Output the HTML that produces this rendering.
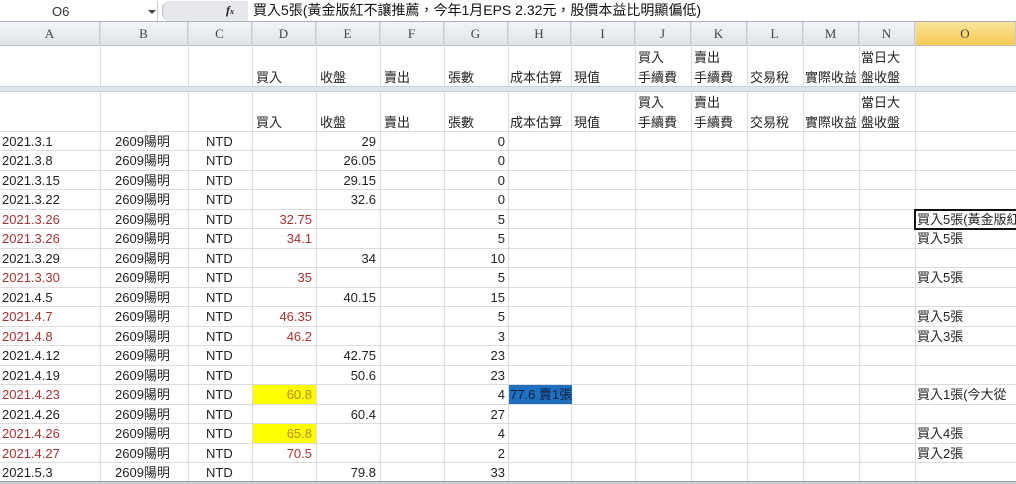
<!DOCTYPE html>
<html><head><meta charset="utf-8"><style>
*{margin:0;padding:0;box-sizing:border-box}
body{width:1016px;height:484px;overflow:hidden;background:#fff;position:relative;font-family:"Liberation Sans","Noto Sans CJK TC","WenQuanYi Zen Hei",sans-serif;font-size:13px;color:#222}
.a{position:absolute;white-space:nowrap;line-height:19px}
.v{position:absolute;top:22px;width:1px;height:460px;background:#dcdcdc}
.h{position:absolute;left:0;width:1016px;height:1px;background:#dcdcdc}
.r{color:#a83232}
.hd{position:absolute;top:22px;height:24px;line-height:24px;text-align:center;color:#444;font-family:"Liberation Serif",serif;font-size:13px;border-right:1px solid #c5cbd3;background:linear-gradient(#f2f4f7,#dfe4ea)}
</style></head><body>
<div style="position:absolute;left:0;top:0;width:1016px;height:22px;background:#fff;border-bottom:1px solid #a8b0bb"></div>
<div style="position:absolute;left:0;top:1px;width:158px;height:20px;border-right:1px solid #ccc"></div>
<div class="a" style="left:52px;top:2px;color:#333">O6</div>
<div style="position:absolute;left:148px;top:10px;border:4px solid transparent;border-top:4px solid #444;border-bottom:0"></div>
<div style="position:absolute;left:162px;top:1px;width:86px;height:20px;background:#e6e8eb;border-radius:8px 0 0 8px;border-left:1px solid #b8bec6"></div>
<div class="a" style="left:226px;top:1px;font-style:italic;font-family:'Liberation Serif',serif;font-weight:bold;font-size:12px">f<span style="font-size:8px">x</span></div>
<div class="a" style="left:253px;top:1px;font-size:14px;color:#111">買入5張(黃金版紅不讓推薦，今年1月EPS 2.32元，股價本益比明顯偏低)</div>
<div class="hd" style="left:0;width:100px">A</div>
<div class="hd" style="left:100px;width:88px">B</div>
<div class="hd" style="left:188px;width:64px">C</div>
<div class="hd" style="left:252px;width:64px">D</div>
<div class="hd" style="left:316px;width:64px">E</div>
<div class="hd" style="left:380px;width:64px">F</div>
<div class="hd" style="left:444px;width:64px">G</div>
<div class="hd" style="left:508px;width:63px">H</div>
<div class="hd" style="left:571px;width:64px">I</div>
<div class="hd" style="left:635px;width:56px">J</div>
<div class="hd" style="left:691px;width:56px">K</div>
<div class="hd" style="left:747px;width:56px">L</div>
<div class="hd" style="left:803px;width:56px">M</div>
<div class="hd" style="left:859px;width:56px">N</div>
<div class="hd" style="left:915px;width:101px;background:linear-gradient(#fbe49a,#f5c94e)">O</div>
<div class="h" style="top:45px;background:#b9c0c9"></div>
<div style="position:absolute;left:0;top:86px;width:1016px;height:6px;background:#dfe5ec;border-top:1px solid #c8d0d9;border-bottom:1px solid #c8d0d9;z-index:2"></div>
<div class="v" style="left:100px"></div><div class="v" style="left:188px"></div><div class="v" style="left:252px"></div><div class="v" style="left:316px"></div><div class="v" style="left:380px"></div><div class="v" style="left:444px"></div><div class="v" style="left:508px"></div><div class="v" style="left:571px"></div><div class="v" style="left:635px"></div><div class="v" style="left:691px"></div><div class="v" style="left:747px"></div><div class="v" style="left:803px"></div><div class="v" style="left:859px"></div><div class="v" style="left:915px"></div>
<div class="h" style="top:131px"></div><div class="h" style="top:150px"></div><div class="h" style="top:170px"></div><div class="h" style="top:189px"></div><div class="h" style="top:209px"></div><div class="h" style="top:228px"></div><div class="h" style="top:248px"></div><div class="h" style="top:267px"></div><div class="h" style="top:287px"></div><div class="h" style="top:306px"></div><div class="h" style="top:326px"></div><div class="h" style="top:345px"></div><div class="h" style="top:365px"></div><div class="h" style="top:384px"></div><div class="h" style="top:404px"></div><div class="h" style="top:423px"></div><div class="h" style="top:443px"></div><div class="h" style="top:462px"></div>
<div class="a" style="left:256px;top:68px">買入</div><div class="a" style="left:320px;top:68px">收盤</div><div class="a" style="left:384px;top:68px">賣出</div><div class="a" style="left:448px;top:68px">張數</div><div class="a" style="left:510px;top:68px">成本估算</div><div class="a" style="left:574px;top:68px">現值</div>
<div class="a" style="left:638px;top:48px">買入</div><div class="a" style="left:638px;top:68px">手續費</div><div class="a" style="left:694px;top:48px">賣出</div><div class="a" style="left:694px;top:68px">手續費</div><div class="a" style="left:750px;top:68px">交易稅</div><div class="a" style="left:805px;top:68px;width:54px;overflow:hidden">實際收益</div><div class="a" style="left:861px;top:48px">當日大</div><div class="a" style="left:861px;top:68px">盤收盤</div>
<div class="a" style="left:256px;top:113px">買入</div><div class="a" style="left:320px;top:113px">收盤</div><div class="a" style="left:384px;top:113px">賣出</div><div class="a" style="left:448px;top:113px">張數</div><div class="a" style="left:510px;top:113px">成本估算</div><div class="a" style="left:574px;top:113px">現值</div>
<div class="a" style="left:638px;top:93px">買入</div><div class="a" style="left:638px;top:113px">手續費</div><div class="a" style="left:694px;top:93px">賣出</div><div class="a" style="left:694px;top:113px">手續費</div><div class="a" style="left:750px;top:113px">交易稅</div><div class="a" style="left:805px;top:113px;width:54px;overflow:hidden">實際收益</div><div class="a" style="left:861px;top:93px">當日大</div><div class="a" style="left:861px;top:113px">盤收盤</div>
<div style="position:absolute;left:253px;top:385px;width:63px;height:19px;background:#ffff00"></div>
<div style="position:absolute;left:253px;top:424px;width:63px;height:19px;background:#ffff00"></div>
<div style="position:absolute;left:509px;top:385px;width:63px;height:19px;background:#1f6fbf"></div>
<div style="position:absolute;left:914px;top:209px;width:104px;height:21px;border:2px solid #111;z-index:3"></div>
<div class="a" style="left:2px;top:132px">2021.3.1</div><div class="a" style="left:115px;top:132px">2609陽明</div><div class="a" style="left:206px;top:132px">NTD</div><div class="a" style="right:640px;top:132px">29</div><div class="a" style="right:511px;top:132px">0</div>
<div class="a" style="left:2px;top:151px">2021.3.8</div><div class="a" style="left:115px;top:151px">2609陽明</div><div class="a" style="left:206px;top:151px">NTD</div><div class="a" style="right:640px;top:151px">26.05</div><div class="a" style="right:511px;top:151px">0</div>
<div class="a" style="left:2px;top:171px">2021.3.15</div><div class="a" style="left:115px;top:171px">2609陽明</div><div class="a" style="left:206px;top:171px">NTD</div><div class="a" style="right:640px;top:171px">29.15</div><div class="a" style="right:511px;top:171px">0</div>
<div class="a" style="left:2px;top:190px">2021.3.22</div><div class="a" style="left:115px;top:190px">2609陽明</div><div class="a" style="left:206px;top:190px">NTD</div><div class="a" style="right:640px;top:190px">32.6</div><div class="a" style="right:511px;top:190px">0</div>
<div class="a r" style="left:2px;top:210px">2021.3.26</div><div class="a" style="left:115px;top:210px">2609陽明</div><div class="a" style="left:206px;top:210px">NTD</div><div class="a r" style="right:704px;top:210px">32.75</div><div class="a" style="right:511px;top:210px">5</div><div class="a" style="left:917px;top:210px;width:99px;overflow:hidden;z-index:4">買入5張(黃金版紅不讓推薦</div>
<div class="a r" style="left:2px;top:229px">2021.3.26</div><div class="a" style="left:115px;top:229px">2609陽明</div><div class="a" style="left:206px;top:229px">NTD</div><div class="a r" style="right:704px;top:229px">34.1</div><div class="a" style="right:511px;top:229px">5</div><div class="a" style="left:917px;top:229px">買入5張</div>
<div class="a" style="left:2px;top:249px">2021.3.29</div><div class="a" style="left:115px;top:249px">2609陽明</div><div class="a" style="left:206px;top:249px">NTD</div><div class="a" style="right:640px;top:249px">34</div><div class="a" style="right:511px;top:249px">10</div>
<div class="a r" style="left:2px;top:268px">2021.3.30</div><div class="a" style="left:115px;top:268px">2609陽明</div><div class="a" style="left:206px;top:268px">NTD</div><div class="a r" style="right:704px;top:268px">35</div><div class="a" style="right:511px;top:268px">5</div><div class="a" style="left:917px;top:268px">買入5張</div>
<div class="a" style="left:2px;top:288px">2021.4.5</div><div class="a" style="left:115px;top:288px">2609陽明</div><div class="a" style="left:206px;top:288px">NTD</div><div class="a" style="right:640px;top:288px">40.15</div><div class="a" style="right:511px;top:288px">15</div>
<div class="a r" style="left:2px;top:307px">2021.4.7</div><div class="a" style="left:115px;top:307px">2609陽明</div><div class="a" style="left:206px;top:307px">NTD</div><div class="a r" style="right:704px;top:307px">46.35</div><div class="a" style="right:511px;top:307px">5</div><div class="a" style="left:917px;top:307px">買入5張</div>
<div class="a r" style="left:2px;top:327px">2021.4.8</div><div class="a" style="left:115px;top:327px">2609陽明</div><div class="a" style="left:206px;top:327px">NTD</div><div class="a r" style="right:704px;top:327px">46.2</div><div class="a" style="right:511px;top:327px">3</div><div class="a" style="left:917px;top:327px">買入3張</div>
<div class="a" style="left:2px;top:346px">2021.4.12</div><div class="a" style="left:115px;top:346px">2609陽明</div><div class="a" style="left:206px;top:346px">NTD</div><div class="a" style="right:640px;top:346px">42.75</div><div class="a" style="right:511px;top:346px">23</div>
<div class="a" style="left:2px;top:366px">2021.4.19</div><div class="a" style="left:115px;top:366px">2609陽明</div><div class="a" style="left:206px;top:366px">NTD</div><div class="a" style="right:640px;top:366px">50.6</div><div class="a" style="right:511px;top:366px">23</div>
<div class="a r" style="left:2px;top:385px">2021.4.23</div><div class="a" style="left:115px;top:385px">2609陽明</div><div class="a" style="left:206px;top:385px">NTD</div><div class="a r" style="right:704px;top:385px;color:#b8862a">60.8</div><div class="a" style="right:511px;top:385px">4</div><div class="a" style="left:510px;top:385px;color:#102040">77.6 賣1張</div><div class="a" style="left:917px;top:385px;width:99px;overflow:hidden">買入1張(今大從</div>
<div class="a" style="left:2px;top:405px">2021.4.26</div><div class="a" style="left:115px;top:405px">2609陽明</div><div class="a" style="left:206px;top:405px">NTD</div><div class="a" style="right:640px;top:405px">60.4</div><div class="a" style="right:511px;top:405px">27</div>
<div class="a r" style="left:2px;top:424px">2021.4.26</div><div class="a" style="left:115px;top:424px">2609陽明</div><div class="a" style="left:206px;top:424px">NTD</div><div class="a r" style="right:704px;top:424px;color:#b8862a">65.8</div><div class="a" style="right:511px;top:424px">4</div><div class="a" style="left:917px;top:424px">買入4張</div>
<div class="a r" style="left:2px;top:444px">2021.4.27</div><div class="a" style="left:115px;top:444px">2609陽明</div><div class="a" style="left:206px;top:444px">NTD</div><div class="a r" style="right:704px;top:444px">70.5</div><div class="a" style="right:511px;top:444px">2</div><div class="a" style="left:917px;top:444px">買入2張</div>
<div class="a" style="left:2px;top:463px">2021.5.3</div><div class="a" style="left:115px;top:463px">2609陽明</div><div class="a" style="left:206px;top:463px">NTD</div><div class="a" style="right:640px;top:463px">79.8</div><div class="a" style="right:511px;top:463px">33</div>
<div style="position:absolute;left:0;top:481px;width:1016px;height:3px;background:#c9d0d9;border-top:1px solid #9aa3ad;z-index:5"></div>
</body></html>
